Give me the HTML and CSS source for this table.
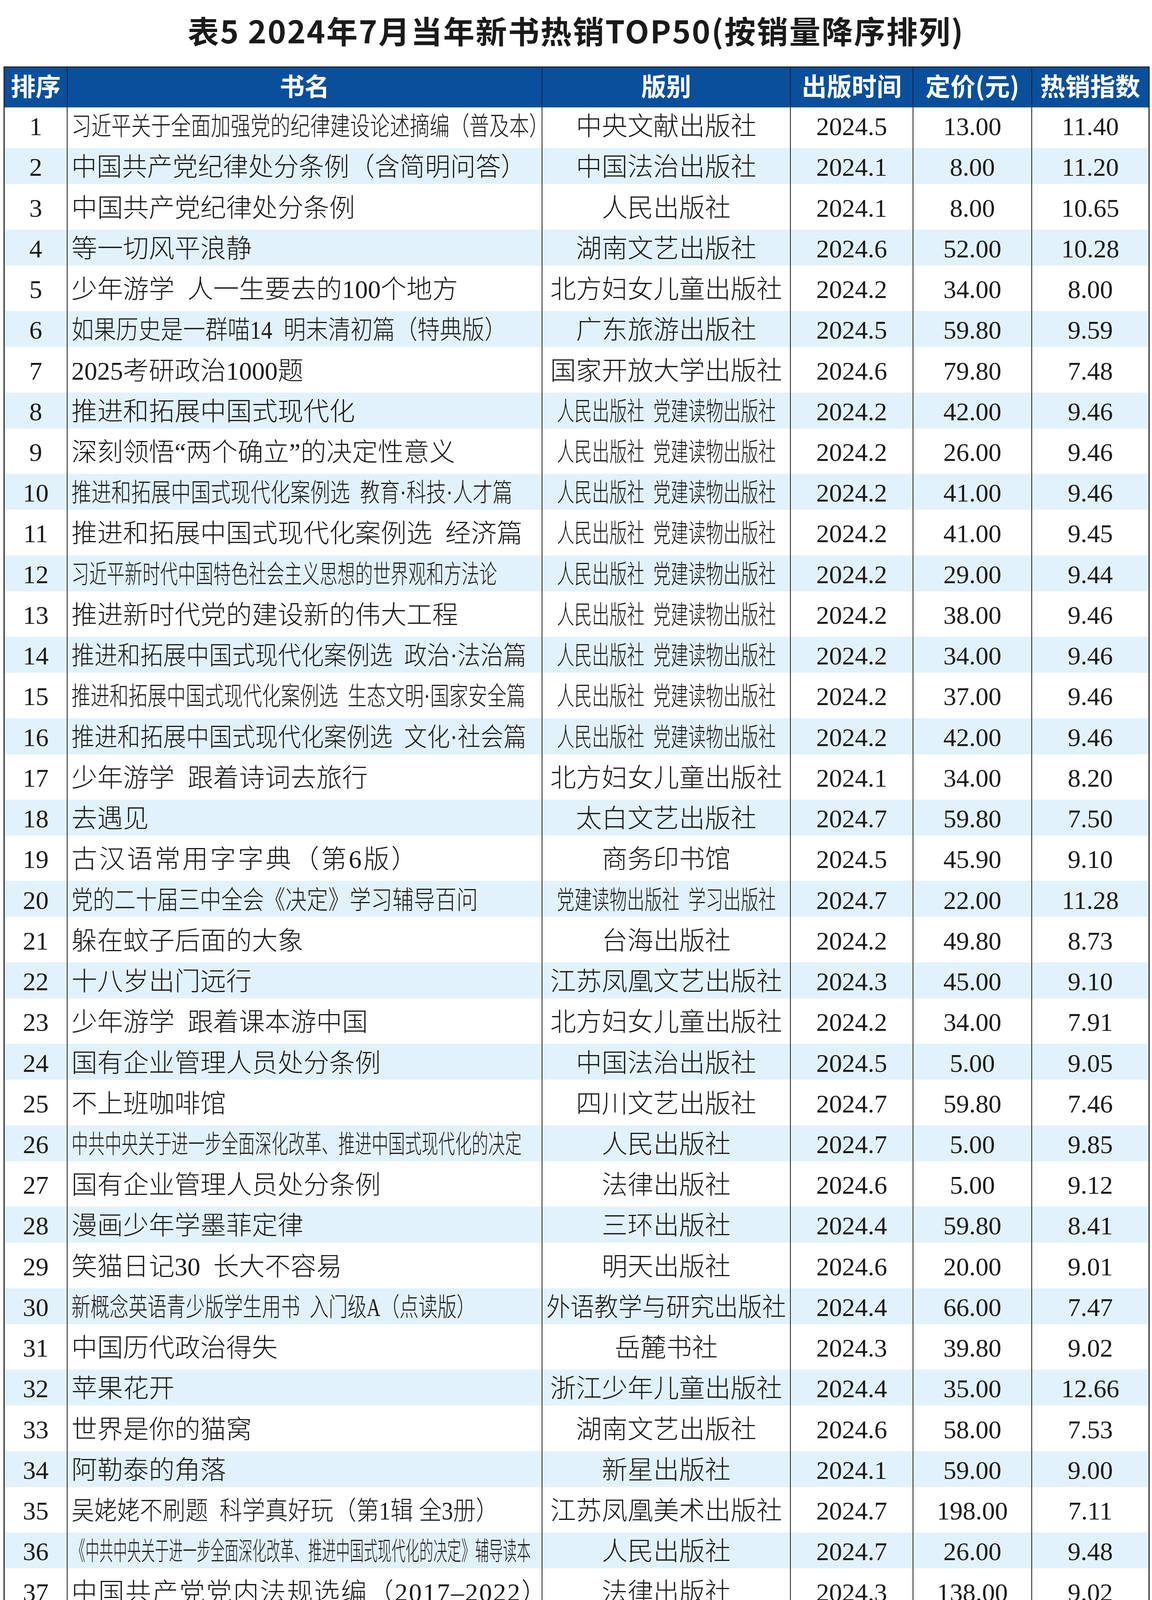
FILE: index.html
```html
<!DOCTYPE html>
<html lang="zh-CN">
<head>
<meta charset="utf-8">
<title>表5 2024年7月当年新书热销TOP50</title>
<link rel="stylesheet" href="styles.css">
</head>
<body>
<h1 class="title">表5 2024年7月当年新书热销TOP50(按销量降序排列)</h1>
<div class="table">
  <div class="row head">
    <div class="cell">排序</div>
    <div class="cell">书名</div>
    <div class="cell">版别</div>
    <div class="cell">出版时间</div>
    <div class="cell">定价(元)</div>
    <div class="cell">热销指数</div>
  </div>
  <div class="row"><div class="cell">1</div><div class="cell name"><span class="t c77">习近平关于全面加强党的纪律建设论述摘编（普及本）</span></div><div class="cell pub"><span class="t">中央文献出版社</span></div><div class="cell">2024.5</div><div class="cell">13.00</div><div class="cell">11.40</div></div>
  <div class="row alt"><div class="cell">2</div><div class="cell name"><span class="t c98">中国共产党纪律处分条例（含简明问答）</span></div><div class="cell pub"><span class="t">中国法治出版社</span></div><div class="cell">2024.1</div><div class="cell">8.00</div><div class="cell">11.20</div></div>
  <div class="row"><div class="cell">3</div><div class="cell name"><span class="t">中国共产党纪律处分条例</span></div><div class="cell pub"><span class="t">人民出版社</span></div><div class="cell">2024.1</div><div class="cell">8.00</div><div class="cell">10.65</div></div>
  <div class="row alt"><div class="cell">4</div><div class="cell name"><span class="t">等一切风平浪静</span></div><div class="cell pub"><span class="t">湖南文艺出版社</span></div><div class="cell">2024.6</div><div class="cell">52.00</div><div class="cell">10.28</div></div>
  <div class="row"><div class="cell">5</div><div class="cell name"><span class="t">少年游学&ensp;人一生要去的100个地方</span></div><div class="cell pub"><span class="t">北方妇女儿童出版社</span></div><div class="cell">2024.2</div><div class="cell">34.00</div><div class="cell">8.00</div></div>
  <div class="row alt"><div class="cell">6</div><div class="cell name"><span class="t c87">如果历史是一群喵14&ensp;明末清初篇（特典版）</span></div><div class="cell pub"><span class="t">广东旅游出版社</span></div><div class="cell">2024.5</div><div class="cell">59.80</div><div class="cell">9.59</div></div>
  <div class="row"><div class="cell">7</div><div class="cell name"><span class="t">2025考研政治1000题</span></div><div class="cell pub"><span class="t">国家开放大学出版社</span></div><div class="cell">2024.6</div><div class="cell">79.80</div><div class="cell">7.48</div></div>
  <div class="row alt"><div class="cell">8</div><div class="cell name"><span class="t">推进和拓展中国式现代化</span></div><div class="cell pub"><span class="t c68">人民出版社&ensp;党建读物出版社</span></div><div class="cell">2024.2</div><div class="cell">42.00</div><div class="cell">9.46</div></div>
  <div class="row"><div class="cell">9</div><div class="cell name"><span class="t">深刻领悟“两个确立”的决定性意义</span></div><div class="cell pub"><span class="t c68">人民出版社&ensp;党建读物出版社</span></div><div class="cell">2024.2</div><div class="cell">26.00</div><div class="cell">9.46</div></div>
  <div class="row alt"><div class="cell">10</div><div class="cell name"><span class="t c77">推进和拓展中国式现代化案例选&ensp;教育·科技·人才篇</span></div><div class="cell pub"><span class="t c68">人民出版社&ensp;党建读物出版社</span></div><div class="cell">2024.2</div><div class="cell">41.00</div><div class="cell">9.46</div></div>
  <div class="row"><div class="cell">11</div><div class="cell name"><span class="t">推进和拓展中国式现代化案例选&ensp;经济篇</span></div><div class="cell pub"><span class="t c68">人民出版社&ensp;党建读物出版社</span></div><div class="cell">2024.2</div><div class="cell">41.00</div><div class="cell">9.45</div></div>
  <div class="row alt"><div class="cell">12</div><div class="cell name"><span class="t c69">习近平新时代中国特色社会主义思想的世界观和方法论</span></div><div class="cell pub"><span class="t c68">人民出版社&ensp;党建读物出版社</span></div><div class="cell">2024.2</div><div class="cell">29.00</div><div class="cell">9.44</div></div>
  <div class="row"><div class="cell">13</div><div class="cell name"><span class="t">推进新时代党的建设新的伟大工程</span></div><div class="cell pub"><span class="t c68">人民出版社&ensp;党建读物出版社</span></div><div class="cell">2024.2</div><div class="cell">38.00</div><div class="cell">9.46</div></div>
  <div class="row alt"><div class="cell">14</div><div class="cell name"><span class="t c89">推进和拓展中国式现代化案例选&ensp;政治·法治篇</span></div><div class="cell pub"><span class="t c68">人民出版社&ensp;党建读物出版社</span></div><div class="cell">2024.2</div><div class="cell">34.00</div><div class="cell">9.46</div></div>
  <div class="row"><div class="cell">15</div><div class="cell name"><span class="t c74">推进和拓展中国式现代化案例选&ensp;生态文明·国家安全篇</span></div><div class="cell pub"><span class="t c68">人民出版社&ensp;党建读物出版社</span></div><div class="cell">2024.2</div><div class="cell">37.00</div><div class="cell">9.46</div></div>
  <div class="row alt"><div class="cell">16</div><div class="cell name"><span class="t c89">推进和拓展中国式现代化案例选&ensp;文化·社会篇</span></div><div class="cell pub"><span class="t c68">人民出版社&ensp;党建读物出版社</span></div><div class="cell">2024.2</div><div class="cell">42.00</div><div class="cell">9.46</div></div>
  <div class="row"><div class="cell">17</div><div class="cell name"><span class="t">少年游学&ensp;跟着诗词去旅行</span></div><div class="cell pub"><span class="t">北方妇女儿童出版社</span></div><div class="cell">2024.1</div><div class="cell">34.00</div><div class="cell">8.20</div></div>
  <div class="row alt"><div class="cell">18</div><div class="cell name"><span class="t">去遇见</span></div><div class="cell pub"><span class="t">太白文艺出版社</span></div><div class="cell">2024.7</div><div class="cell">59.80</div><div class="cell">7.50</div></div>
  <div class="row"><div class="cell">19</div><div class="cell name"><span class="t ls5">古汉语常用字字典（第6版）</span></div><div class="cell pub"><span class="t">商务印书馆</span></div><div class="cell">2024.5</div><div class="cell">45.90</div><div class="cell">9.10</div></div>
  <div class="row alt"><div class="cell">20</div><div class="cell name"><span class="t c83">党的二十届三中全会《决定》学习辅导百问</span></div><div class="cell pub"><span class="t c68">党建读物出版社&ensp;学习出版社</span></div><div class="cell">2024.7</div><div class="cell">22.00</div><div class="cell">11.28</div></div>
  <div class="row"><div class="cell">21</div><div class="cell name"><span class="t">躲在蚊子后面的大象</span></div><div class="cell pub"><span class="t">台海出版社</span></div><div class="cell">2024.2</div><div class="cell">49.80</div><div class="cell">8.73</div></div>
  <div class="row alt"><div class="cell">22</div><div class="cell name"><span class="t">十八岁出门远行</span></div><div class="cell pub"><span class="t">江苏凤凰文艺出版社</span></div><div class="cell">2024.3</div><div class="cell">45.00</div><div class="cell">9.10</div></div>
  <div class="row"><div class="cell">23</div><div class="cell name"><span class="t">少年游学&ensp;跟着课本游中国</span></div><div class="cell pub"><span class="t">北方妇女儿童出版社</span></div><div class="cell">2024.2</div><div class="cell">34.00</div><div class="cell">7.91</div></div>
  <div class="row alt"><div class="cell">24</div><div class="cell name"><span class="t">国有企业管理人员处分条例</span></div><div class="cell pub"><span class="t">中国法治出版社</span></div><div class="cell">2024.5</div><div class="cell">5.00</div><div class="cell">9.05</div></div>
  <div class="row"><div class="cell">25</div><div class="cell name"><span class="t">不上班咖啡馆</span></div><div class="cell pub"><span class="t">四川文艺出版社</span></div><div class="cell">2024.7</div><div class="cell">59.80</div><div class="cell">7.46</div></div>
  <div class="row alt"><div class="cell">26</div><div class="cell name"><span class="t c65">中共中央关于进一步全面深化改革、推进中国式现代化的决定</span></div><div class="cell pub"><span class="t">人民出版社</span></div><div class="cell">2024.7</div><div class="cell">5.00</div><div class="cell">9.85</div></div>
  <div class="row"><div class="cell">27</div><div class="cell name"><span class="t">国有企业管理人员处分条例</span></div><div class="cell pub"><span class="t">法律出版社</span></div><div class="cell">2024.6</div><div class="cell">5.00</div><div class="cell">9.12</div></div>
  <div class="row alt"><div class="cell">28</div><div class="cell name"><span class="t">漫画少年学墨菲定律</span></div><div class="cell pub"><span class="t">三环出版社</span></div><div class="cell">2024.4</div><div class="cell">59.80</div><div class="cell">8.41</div></div>
  <div class="row"><div class="cell">29</div><div class="cell name"><span class="t">笑猫日记30&ensp;长大不容易</span></div><div class="cell pub"><span class="t">明天出版社</span></div><div class="cell">2024.6</div><div class="cell">20.00</div><div class="cell">9.01</div></div>
  <div class="row alt"><div class="cell">30</div><div class="cell name"><span class="t c74">新概念英语青少版学生用书&ensp;入门级A（点读版）</span></div><div class="cell pub"><span class="t c93">外语教学与研究出版社</span></div><div class="cell">2024.4</div><div class="cell">66.00</div><div class="cell">7.47</div></div>
  <div class="row"><div class="cell">31</div><div class="cell name"><span class="t">中国历代政治得失</span></div><div class="cell pub"><span class="t">岳麓书社</span></div><div class="cell">2024.3</div><div class="cell">39.80</div><div class="cell">9.02</div></div>
  <div class="row alt"><div class="cell">32</div><div class="cell name"><span class="t">苹果花开</span></div><div class="cell pub"><span class="t">浙江少年儿童出版社</span></div><div class="cell">2024.4</div><div class="cell">35.00</div><div class="cell">12.66</div></div>
  <div class="row"><div class="cell">33</div><div class="cell name"><span class="t">世界是你的猫窝</span></div><div class="cell pub"><span class="t">湖南文艺出版社</span></div><div class="cell">2024.6</div><div class="cell">58.00</div><div class="cell">7.53</div></div>
  <div class="row alt"><div class="cell">34</div><div class="cell name"><span class="t">阿勒泰的角落</span></div><div class="cell pub"><span class="t">新星出版社</span></div><div class="cell">2024.1</div><div class="cell">59.00</div><div class="cell">9.00</div></div>
  <div class="row"><div class="cell">35</div><div class="cell name"><span class="t c88">吴姥姥不刷题&ensp;科学真好玩（第1辑 全3册）</span></div><div class="cell pub"><span class="t">江苏凤凰美术出版社</span></div><div class="cell">2024.7</div><div class="cell">198.00</div><div class="cell">7.11</div></div>
  <div class="row alt"><div class="cell">36</div><div class="cell name"><span class="t c54">《中共中央关于进一步全面深化改革、推进中国式现代化的决定》辅导读本</span></div><div class="cell pub"><span class="t">人民出版社</span></div><div class="cell">2024.7</div><div class="cell">26.00</div><div class="cell">9.48</div></div>
  <div class="row"><div class="cell">37</div><div class="cell name"><span class="t ls3">中国共产党党内法规选编（2017–2022）</span></div><div class="cell pub"><span class="t">法律出版社</span></div><div class="cell">2024.3</div><div class="cell">138.00</div><div class="cell">9.02</div></div>
  <div class="row alt"><div class="cell">38</div><div class="cell name"><span class="t">只有春天和爱允许入内</span></div><div class="cell pub"><span class="t">湖南文艺出版社</span></div><div class="cell">2024.4</div><div class="cell">59.80</div><div class="cell">8.92</div></div>
  <div class="row"><div class="cell">39</div><div class="cell name"><span class="t">小学生必背文学常识（2024漫画版）</span></div><div class="cell pub"><span class="t">湖南教育出版社</span></div><div class="cell">2024.5</div><div class="cell">78.00</div><div class="cell">7.09</div></div>
  <div class="row alt"><div class="cell">40</div><div class="cell name"><span class="t">美的历程</span></div><div class="cell pub"><span class="t">岳麓书社</span></div><div class="cell">2024.6</div><div class="cell">65.00</div><div class="cell">8.39</div></div>
  <div class="row"><div class="cell">41</div><div class="cell name"><span class="t">少年游学&ensp;我爱你中国走遍祖国</span></div><div class="cell pub"><span class="t">北方妇女儿童出版社</span></div><div class="cell">2024.2</div><div class="cell">34.00</div><div class="cell">7.30</div></div>
  <div class="row alt"><div class="cell">42</div><div class="cell name"><span class="t">胜天半子&ensp;做事与成事的权衡博弈之道</span></div><div class="cell pub"><span class="t">中国财富出版社</span></div><div class="cell">2024.4</div><div class="cell">52.00</div><div class="cell">7.19</div></div>
  <div class="row"><div class="cell">43</div><div class="cell name"><span class="t">如果历史是一群喵1–14（套装14册）</span></div><div class="cell pub"><span class="t">广东旅游出版社</span></div><div class="cell">2024.5</div><div class="cell">837.20</div><div class="cell">7.10</div></div>
  <div class="row alt"><div class="cell">44</div><div class="cell name"><span class="t">给孩子的墨菲定律漫画</span></div><div class="cell pub"><span class="t">长江少年儿童出版社</span></div><div class="cell">2024.4</div><div class="cell">88.00</div><div class="cell">7.08</div></div>
  <div class="row"><div class="cell">45</div><div class="cell name"><span class="t c84">新概念英语青少版学生用书&ensp;入门级B（点读版）</span></div><div class="cell pub"><span class="t c93">外语教学与研究出版社</span></div><div class="cell">2024.4</div><div class="cell">66.00</div><div class="cell">6.75</div></div>
  <div class="row alt"><div class="cell">46</div><div class="cell name"><span class="t">我偏爱这人间荒芜</span></div><div class="cell pub"><span class="t">江苏凤凰文艺出版社</span></div><div class="cell">2024.3</div><div class="cell">42.00</div><div class="cell">7.94</div></div>
  <div class="row"><div class="cell">47</div><div class="cell name"><span class="t">刚刚说过</span></div><div class="cell pub"><span class="t">作家出版社</span></div><div class="cell">2024.4</div><div class="cell">49.80</div><div class="cell">9.02</div></div>
  <div class="row alt"><div class="cell">48</div><div class="cell name"><span class="t">漫画时间管理启蒙书</span></div><div class="cell pub"><span class="t">长江出版社</span></div><div class="cell">2024.3</div><div class="cell">39.80</div><div class="cell">7.18</div></div>
  <div class="row"><div class="cell">49</div><div class="cell name"><span class="t">空腹力</span></div><div class="cell pub"><span class="t">天津科学技术出版社</span></div><div class="cell">2024.2</div><div class="cell">58.00</div><div class="cell">7.30</div></div>
  <div class="row alt last"><div class="cell">50</div><div class="cell name"><span class="t">草民</span></div><div class="cell pub"><span class="t">广州出版社</span></div><div class="cell">2024.5</div><div class="cell">59.80</div><div class="cell">8.90</div></div>
</div>
</body>
</html>
```

FILE: styles.css
```css
html, body {
  margin: 0;
  padding: 0;
  background: #ffffff;
}

body {
  width: 2950px;
  color: #1a1a1a;
}

.title {
  margin: 0;
  height: 170px;
  box-sizing: border-box;
  padding-bottom: 18px;
  display: flex;
  align-items: center;
  justify-content: center;
  font-family: "Noto Sans CJK SC", sans-serif;
  font-weight: 700;
  font-size: 80px;
  letter-spacing: 3px;
  line-height: 1;
  color: #1a1a1a;
  white-space: nowrap;
}

.table {
  margin-left: 9px;
  width: 2935px;
  box-sizing: border-box;
  border: 3px solid #2a2a2a;
}

.row {
  display: grid;
  grid-template-columns: 159px 1216px 636px 314px 304px 300px;
  height: 104.24px;
  font-family: "Liberation Serif", "Noto Sans CJK SC", serif;
  font-size: 66px;
  font-weight: 300;
  line-height: 1;
}

.row.alt {
  background: linear-gradient(#e2f2fc, #e2f2fc) no-repeat left top / 100% 92px;
}

.row.last {
  height: 93px;
}

.row.last .cell {
  padding-bottom: 2px;
}

.cell {
  display: flex;
  align-items: center;
  justify-content: center;
  box-sizing: border-box;
  padding-bottom: 6px;
  border-left: 2px solid #1a1a1a;
  white-space: nowrap;
  min-width: 0;
}

.cell:first-child {
  border-left: none;
}

.cell.name {
  justify-content: flex-start;
  padding-left: 10px;
}

.head {
  height: 102px;
  background: #0a4f9b;
  color: #ffffff;
  font-family: "Noto Sans CJK SC", sans-serif;
  font-weight: 700;
  font-size: 64px;
}

.head .cell {
  padding-bottom: 14px;
  border-left-color: #16253a;
}

.t {
  display: inline-block;
  white-space: nowrap;
  flex: none;
}

.cell.name .t {
  transform-origin: left center;
}

.cell.pub .t {
  transform-origin: center center;
}

.c54 { transform: scaleX(0.54); }
.c65 { transform: scaleX(0.647); }
.c68 { transform: scaleX(0.68); }
.c69 { transform: scaleX(0.688); }
.c74 { transform: scaleX(0.739); }
.c77 { transform: scaleX(0.772); }
.c83 { transform: scaleX(0.83); }
.c84 { transform: scaleX(0.84); }
.c87 { transform: scaleX(0.866); }
.c88 { transform: scaleX(0.884); }
.c89 { transform: scaleX(0.89); }
.c93 { transform: scaleX(0.93); }
.c98 { transform: scaleX(0.98); }

.ls5 { letter-spacing: 5px; }
.ls3 { letter-spacing: 3px; }
```
